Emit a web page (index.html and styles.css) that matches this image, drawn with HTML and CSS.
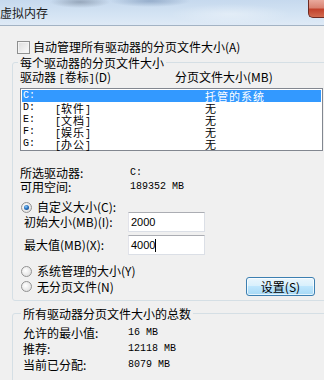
FILE: index.html
```html
<!DOCTYPE html>
<html lang="zh-CN">
<head>
<meta charset="utf-8">
<title>虚拟内存</title>
<link rel="stylesheet" href="styles.css">
</head>
<body>
<div class="window">
  <div class="titlebar">
    <span class="title">虚拟内存</span>
    <div class="close">
      <svg width="14" height="11" viewBox="0 0 14 11"><path d="M2 1.5 L12 9.5 M12 1.5 L2 9.5" stroke="#4a1c16" stroke-width="4" stroke-linecap="round"/><path d="M2 1.5 L12 9.5 M12 1.5 L2 9.5" stroke="#ffffff" stroke-width="2.2" stroke-linecap="round"/></svg>
    </div>
  </div>
  <div class="content">
    <div class="chk-row"><span class="checkbox"></span><span>自动管理所有驱动器的分页文件大小(A)</span></div>

    <fieldset class="group g1">
      <legend>每个驱动器的分页文件大小</legend>
      <div class="list-head"><span class="h1">驱动器 <span class="m">[</span>卷标<span class="m">]</span>(D)</span><span>分页文件大小(MB)</span></div>
      <div class="listbox">
        <div class="lrow sel"><span class="drv m">C:</span><span class="lbl"></span><span class="size">托管的系统</span></div>
        <div class="lrow"><span class="drv m">D:</span><span class="lbl"><span class="m">[</span>软件<span class="m">]</span></span><span class="size">无</span></div>
        <div class="lrow"><span class="drv m">E:</span><span class="lbl"><span class="m">[</span>文档<span class="m">]</span></span><span class="size">无</span></div>
        <div class="lrow"><span class="drv m">F:</span><span class="lbl"><span class="m">[</span>娱乐<span class="m">]</span></span><span class="size">无</span></div>
        <div class="lrow"><span class="drv m">G:</span><span class="lbl"><span class="m">[</span>办公<span class="m">]</span></span><span class="size">无</span></div>
      </div>

      <div class="info">
        <div class="irow"><span class="ilbl">所选驱动器:</span><span class="m">C:</span></div>
        <div class="irow"><span class="ilbl">可用空间:</span><span class="m">189352 MB</span></div>
      </div>

      <div class="opt r1"><span class="radio on"></span><span>自定义大小(C):</span></div>
      <div class="field f1"><span class="flbl">初始大小(MB)(I):</span><div class="input">2000</div></div>
      <div class="field f2"><span class="flbl">最大值(MB)(X):</span><div class="input">4000<span class="caret"></span></div></div>
      <div class="opt r2"><span class="radio"></span><span>系统管理的大小(Y)</span></div>
      <div class="opt r3"><span class="radio"></span><span>无分页文件(N)</span><button class="btn">设置(S)</button></div>
    </fieldset>

    <fieldset class="group g2">
      <legend>所有驱动器分页文件大小的总数</legend>
      <div class="trow"><span class="tlbl">允许的最小值:</span><span class="m">16 MB</span></div>
      <div class="trow"><span class="tlbl">推荐:</span><span class="m">12118 MB</span></div>
      <div class="trow"><span class="tlbl">当前已分配:</span><span class="m">8079 MB</span></div>
    </fieldset>
  </div>
</div>
</body>
</html>
```

FILE: styles.css
```css
* { box-sizing: border-box; }
html, body { margin: 0; padding: 0; }
body {
  width: 324px;
  height: 380px;
  overflow: hidden;
  background: #f0f0f0;
  font-family: "Noto Sans CJK SC", "Noto Sans", sans-serif;
  font-size: 12px;
  color: #000;
}
.window { width: 340px; }

.titlebar {
  height: 26px;
  display: flex;
  align-items: flex-start;
  border-bottom: 1px solid #a3b3c4;
  background:
    radial-gradient(ellipse 30px 6px at 80px 2px, rgba(110,125,145,0.55), rgba(110,125,145,0) 100%),
    radial-gradient(ellipse 40px 6px at 150px 1px, rgba(90,120,160,0.45), rgba(90,120,160,0) 100%),
    radial-gradient(ellipse 60px 10px at 230px 14px, rgba(255,255,255,0.35), rgba(255,255,255,0) 100%),
    linear-gradient(to bottom, #c6d9ee 0%, #d3e3f3 55%, #dfeaf6 100%);
}
.title {
  flex: 1;
  padding-top: 6px;
  line-height: 14px;
  font-size: 12px;
  color: #1a1a1a;
}
.close {
  width: 32px;
  height: 18px;
  display: flex;
  align-items: center;
  justify-content: flex-end;
  padding-right: 2px;
  border: 1px solid #6d2a22;
  border-top: none;
  border-right: none;
  border-radius: 0 0 0 5px;
  background: linear-gradient(to bottom, #e9a99c 0%, #d98372 45%, #c2422c 55%, #d26a4f 100%);
}

.content { padding-top: 14px; }

.chk-row {
  display: flex;
  align-items: center;
  height: 14px;
  line-height: 14px;
  padding-left: 17px;
}
.checkbox {
  width: 13px;
  height: 13px;
  margin-right: 3px;
  border: 1px solid #8e8f8f;
  background: linear-gradient(135deg, #dcdcdc, #fbfbfb);
  box-shadow: inset 0 0 0 1px #f4f4f4;
}

.group {
  margin: 0 0 0 12px;
  padding: 2px 0 4px 7px;
  border: 1px solid #d5dfe5;
  border-radius: 3px;
  min-width: 0;
}
.group legend {
  padding: 0 2px;
  margin-left: -2px;
  line-height: 13px;
}
.g1 { margin-top: 2px; }
.g2 { margin-top: 6px; padding-top: 5px; padding-left: 10px; padding-bottom: 10px; }

.list-head {
  display: flex;
  line-height: 12px;
  height: 12px;
}
.h1 { width: 155px; }

.listbox {
  margin-top: 5px;
  width: 303px;
  height: 63px;
  border: 1px solid #828790;
  background: #fff;
  padding: 1px 1px 0 1px;
}
.lrow {
  display: flex;
  height: 12px;
  line-height: 12px;
  padding-left: 1px;
}
.lrow.sel { background: #3399ff; color: #fff; }
.drv { width: 32px; }
.lbl { width: 150px; font-size: 11px; letter-spacing: 1px; }
.size { font-size: 11px; letter-spacing: 1px; }
.m {
  font-family: "Liberation Mono", "DejaVu Sans Mono", monospace;
  font-size: 10px;
  letter-spacing: 0;
}

.info { margin-top: 15px; }
.irow { display: flex; height: 14px; line-height: 14px; }
.ilbl { width: 110px; }

.opt {
  display: flex;
  align-items: center;
  height: 14px;
  line-height: 14px;
  padding-left: 1px;
}
.radio {
  width: 11px;
  height: 11px;
  margin-right: 5px;
  border-radius: 50%;
  border: 1px solid #929292;
  background: radial-gradient(circle at 40% 40%, #ffffff, #d8d8d8);
  position: relative;
  flex: none;
}
.radio.on::after {
  content: "";
  position: absolute;
  left: 2px;
  top: 2px;
  width: 5px;
  height: 5px;
  border-radius: 50%;
  background: radial-gradient(circle at 40% 35%, #8fd0ff 0%, #2a73c0 45%, #0f3a74 100%);
}
.r1 { margin-top: 6px; }
.r2 { margin-top: 9px; }
.r3 { margin-top: -1px; height: 19px; width: 295px; }

.field {
  display: flex;
  align-items: center;
  height: 20px;
  padding-left: 4px;
}
.f1 { margin-top: -2px; }
.f2 { margin-top: 3px; }
.flbl { width: 104px; line-height: 14px; }
.input {
  width: 77px;
  height: 20px;
  border: 1px solid #dbdfe6;
  border-top-color: #abadb3;
  border-left-color: #e2e3ea;
  background: #fff;
  padding-left: 2px;
  font-family: "Liberation Sans", Arial, sans-serif;
  font-size: 11px;
  line-height: 17px;
  display: flex;
  align-items: center;
}
.caret {
  display: inline-block;
  width: 1px;
  height: 13px;
  background: #000;
  margin-left: 0;
}

.btn {
  margin-left: auto;
  width: 69px;
  height: 19px;
  padding: 0;
  border: 1px solid #3c7fb1;
  border-radius: 3px;
  background: linear-gradient(to bottom, #eaf6fd 0%, #d9f0fc 45%, #bee6fd 50%, #a7d9f5 100%);
  box-shadow: inset 0 0 0 1px rgba(255,255,255,0.7);
  font-family: "Noto Sans CJK SC", sans-serif;
  font-size: 12px;
  line-height: 15px;
  color: #000;
}

.trow { display: flex; height: 16px; line-height: 16px; }
.tlbl { width: 105px; }
```
